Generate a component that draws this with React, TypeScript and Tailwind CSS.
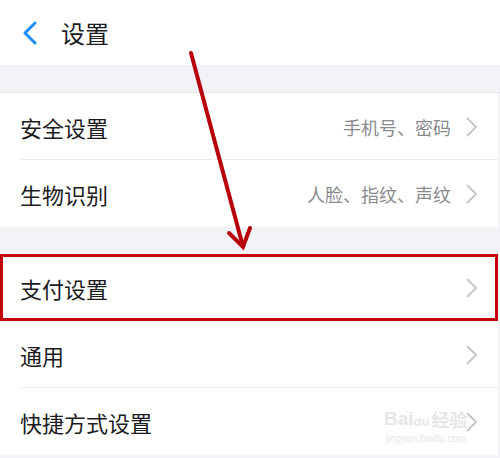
import React from "react";

const Chevron = () => (
  <svg width="12" height="20" viewBox="0 0 12 20" className="shrink-0">
    <path d="M1.5 1.5 L10 10 L1.5 18.5" fill="none" stroke="#c4c4c6" strokeWidth="1.8" strokeLinecap="round" strokeLinejoin="round" />
  </svg>
);

function Row({ label, value, sep }: { label: string; value?: string; sep?: boolean }) {
  return (
    <div className="relative h-[67px] flex items-center pl-[20px] pr-[20px]">
      <span className="text-[22px] text-[#1c1c1e] flex-1 leading-none">{label}</span>
      {value && <span className="text-[18px] text-[#8a8a8e] mr-[15px] leading-none">{value}</span>}
      <Chevron />
      {sep && <div className="absolute left-[20px] right-0 bottom-0 h-px bg-[#ececef]" />}
    </div>
  );
}

export default function App() {
  return (
    <div
      className="relative w-[500px] h-[458px] overflow-hidden bg-[#f2f2f7]"
      style={{ fontFamily: '"Noto Sans CJK SC", "Noto Sans", sans-serif' }}
    >
      <div className="h-[65px] bg-white flex items-center">
        <svg width="18" height="24" viewBox="0 0 18 24" className="ml-[21px]">
          <path d="M14 2 L4 12 L14 22" fill="none" stroke="#1e8ef5" strokeWidth="3" strokeLinecap="round" strokeLinejoin="round" />
        </svg>
        <span className="ml-[22px] text-[24px] text-[#1c1c1e] leading-none">设置</span>
      </div>
      <div className="h-[28px] border-b border-[#e6e6ea]" />
      <div className="bg-white w-[498px]">
        <Row label="安全设置" value="手机号、密码" sep />
        <Row label="生物识别" value="人脸、指纹、声纹" />
      </div>
      <div className="h-[27px]" />
      <div className="bg-white w-[498px]">
        <Row label="支付设置" />
        <Row label="通用" sep />
        <Row label="快捷方式设置" />
      </div>

      {/* watermark */}
      <div className="absolute left-[384px] top-[406px] flex flex-col items-center text-[#e6e6e6]">
        <div className="flex items-end h-[22px] leading-none" style={{ fontFamily: '"Liberation Sans", "Noto Sans CJK SC", sans-serif' }}>
          <span className="text-[19px] font-bold">Bai</span>
          <span className="text-[13px] font-bold">du</span>
          <span className="text-[18px] font-bold ml-[2px]" style={{ fontFamily: '"Noto Sans CJK SC", sans-serif' }}>经验</span>
        </div>
        <span className="text-[10px] leading-none mt-[6px]" style={{ fontFamily: '"Liberation Sans", sans-serif' }}>jingyan.baidu.com</span>
      </div>

      {/* red highlight */}
      <div className="absolute left-0 top-[254px] w-[498px] h-[67px] border-[3px] border-[#c4000a]" />

      {/* arrow */}
      <svg className="absolute left-0 top-0" width="500" height="458" viewBox="0 0 500 458">
        <line x1="191" y1="53" x2="242" y2="243" stroke="#b8000a" strokeWidth="4" strokeLinecap="round" />
        <path d="M229 233 L243 247 L250 228" fill="none" stroke="#b8000a" strokeWidth="4" strokeLinecap="round" strokeLinejoin="miter" />
      </svg>
    </div>
  );
}
